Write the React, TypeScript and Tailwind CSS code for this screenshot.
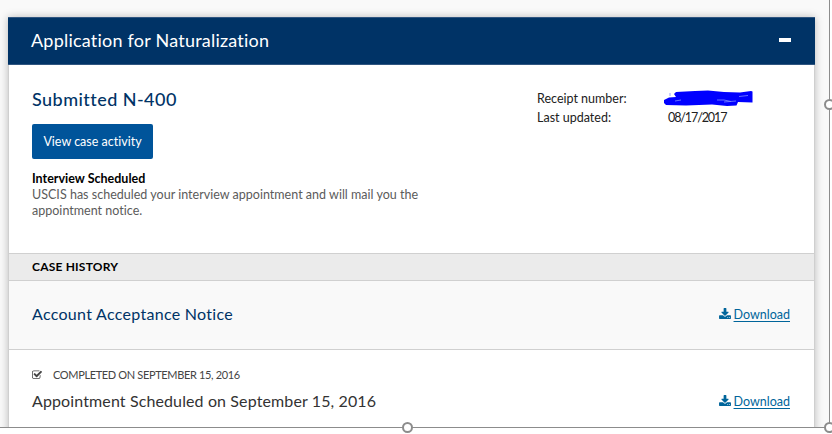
type ClassNameProps = {
  className?: string;
};

export default function App() {
  return (
    <div className="relative h-[434px] w-[832px] overflow-hidden bg-white font-['Lato',sans-serif] text-[#212121] [font-variant-ligatures:none]">
      <div className="h-[428px] w-[830px] overflow-hidden border-r border-b border-[#8c8c8c] bg-[#f9f9f9] pt-[17px] pl-2">
        <section className="h-[440px] w-[807px] bg-white shadow-[0_0_8px_rgba(0,0,0,0.25)]">
          <header className="flex h-12 items-center justify-between border-y border-[#2f5580] bg-[#003366] pr-6 pl-[23px] text-white">
            <h1 className="mb-0.5 text-[18px] leading-6 tracking-[0.22px]">Application for Naturalization</h1>
            <span className="mb-0.5 h-1 w-3 bg-white" />
          </header>

          <div className="border-x border-[#cfcfcf]">
            {/* Case summary */}
            <div className="flex h-[188px] pl-[23px]">
              <div className="w-[505px]">
                <h2 className="mt-[22px] text-[18px] leading-6 font-medium tracking-[0.45px] text-[#003366]">
                  Submitted N-400
                </h2>
                <button className="mt-[13px] flex h-[35px] w-[121px] items-center justify-center rounded-[2px] bg-[#00549a] pt-0.5 text-[12.5px] text-white">
                  View case activity
                </button>
                <p className="mt-3 text-[12.5px] leading-4 font-bold text-black">Interview Scheduled</p>
                <p className="text-[12.5px] leading-4 tracking-[0.015px] text-[#5b5b5b]">
                  USCIS has scheduled your interview appointment and will mail you the
                  <br />
                  appointment notice.
                </p>
              </div>
              <dl className="mt-6 grid h-[38px] grid-cols-[131px_auto] text-[12.5px] leading-[19px]">
                <dt>Receipt number:</dt>
                <dd className="pt-px">
                  <Redaction />
                </dd>
                <dt>Last updated:</dt>
                <dd className="tracking-[-1.1px]">08/17/2017</dd>
              </dl>
            </div>

            {/* Case history */}
            <div className="flex h-7 items-center border-y border-[#d0d0d0] bg-[#ebebeb] pl-[23px] text-[12px] font-bold tracking-[0.2px] text-black">
              CASE HISTORY
            </div>
            <div className="flex h-[69px] items-center justify-between border-b border-[#d0d0d0] bg-[#f9f9f9] pr-6 pl-[23px]">
              <h3 className="-mt-0.5 text-[16px] tracking-[0.29px] text-[#003366]">Account Acceptance Notice</h3>
              <DownloadLink />
            </div>
            <div className="flex h-[100px] justify-between pr-6 pl-[23px]">
              <div>
                <p className="mt-[17px] flex items-center gap-[11px] text-[11px] leading-4 tracking-[-0.35px] text-[#444]">
                  <CheckIcon />
                  COMPLETED ON SEPTEMBER 15, 2016
                </p>
                <h3 className="mt-1.5 text-[16px] leading-6 tracking-[0.12px] text-[#333]">
                  Appointment Scheduled on September 15, 2016
                </h3>
              </div>
              <DownloadLink className="mt-[42px]" />
            </div>
          </div>
        </section>
      </div>

      {/* Selection handles */}
      <Handle className="top-[99px] left-[824px]" />
      <Handle className="top-[422px] left-[402px]" />
      <Handle className="top-[422px] left-[824px]" />
    </div>
  );
}

function Handle({ className = "" }: ClassNameProps) {
  return <span className={`absolute h-[11px] w-[11px] rounded-full border-2 border-[#8c8c8c] bg-white ${className}`} />;
}

function DownloadLink({ className = "" }: ClassNameProps) {
  return (
    <a href="#" className={`flex h-5 items-center gap-[3px] text-[12.5px] text-[#00659b] ${className}`}>
      <svg viewBox="64 0 1664 1536" className="mb-1 h-[11px] w-3" fill="currentColor">
        <path d="M1344 1344q0-26-19-45t-45-19-45 19-19 45 19 45 45 19 45-19 19-45zm256 0q0-26-19-45t-45-19-45 19-19 45 19 45 45 19 45-19 19-45zm128-224v320q0 40-28 68t-68 28h-1472q-40 0-68-28t-28-68v-320q0-40 28-68t68-28h465l135 136q58 56 136 56t136-56l136-136h464q40 0 68 28t28 68zm-325-569q17 41-14 70l-448 448q-18 19-45 19t-45-19l-448-448q-31-29-14-70 17-39 59-39h256v-448q0-26 19-45t45-19h256q26 0 45 19t19 45v448h256q42 0 59 39z" />
      </svg>
      <span className="underline underline-offset-2">Download</span>
    </a>
  );
}

function CheckIcon() {
  return (
    <svg viewBox="64 128 1664 1536" className="h-[10px] w-[10px]" fill="currentColor">
      <path d="M1472 930v318q0 119-84.5 203.5t-203.5 84.5h-832q-119 0-203.5-84.5t-84.5-203.5v-832q0-119 84.5-203.5t203.5-84.5h832q63 0 117 25 15 7 18 23 3 17-9 29l-49 49q-10 10-23 10-3 0-9-2-23-6-45-6h-832q-66 0-113 47t-47 113v832q0 66 47 113t113 47h832q66 0 113-47t47-113v-254q0-13 9-22l64-64q10-10 23-10 6 0 12 3 20 8 20 29zm231-489l-814 814q-24 24-57 24t-57-24l-430-430q-24-24-24-57t24-57l110-110q24-24 57-24t57 24l263 263 647-647q24-24 57-24t57 24l110 110q24 24 24 57t-24 57z" />
    </svg>
  );
}

// Scribble over the receipt number
function Redaction() {
  return (
    <svg viewBox="0 0 90 17" className="-ml-1 h-[17px] w-[90px]">
      <path
        fill="#0000ff"
        d="M12 2 L31 1 L44 0.500 L60 2 L76 2.500 L87 1 L88.500 1.500 L88.500 12.500 L74 12 L72.500 15.500 L63 16 L48 14.500 L22 15.500 L2 15 L0 13 L0 10 L5 7.500 L12 7 L10 4 Z"
      />
      <path fill="none" stroke="#7f8cff" strokeWidth="0.8" d="M6 3v3M11 11l6-1M53 10h7l7 1.500M60 12l12-1M75 6.500l9-1" />
    </svg>
  );
}
